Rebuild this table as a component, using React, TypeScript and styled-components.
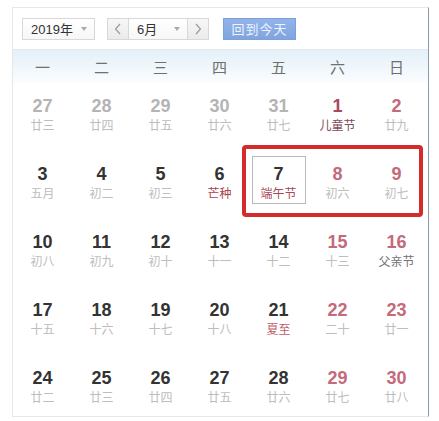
import React from "react";
import styled, { createGlobalStyle } from "styled-components";

type Kind = "other" | "normal" | "weekend";

interface Day {
  n: number;
  sub: string;
  kind: Kind;
  subColor?: string;
  numColor?: string;
  selected?: boolean;
}

const WEEK = ["一", "二", "三", "四", "五", "六", "日"];

const DAYS: Day[] = [
  { n: 27, sub: "廿三", kind: "other" },
  { n: 28, sub: "廿四", kind: "other" },
  { n: 29, sub: "廿五", kind: "other" },
  { n: 30, sub: "廿六", kind: "other" },
  { n: 31, sub: "廿七", kind: "other" },
  { n: 1, sub: "儿童节", kind: "weekend", subColor: "#7d4c58", numColor: "#a54a5e" },
  { n: 2, sub: "廿九", kind: "weekend" },
  { n: 3, sub: "五月", kind: "normal" },
  { n: 4, sub: "初二", kind: "normal" },
  { n: 5, sub: "初三", kind: "normal" },
  { n: 6, sub: "芒种", kind: "normal", subColor: "#a8424e" },
  { n: 7, sub: "端午节", kind: "normal", subColor: "#a8485a", selected: true },
  { n: 8, sub: "初六", kind: "weekend" },
  { n: 9, sub: "初七", kind: "weekend" },
  { n: 10, sub: "初八", kind: "normal" },
  { n: 11, sub: "初九", kind: "normal" },
  { n: 12, sub: "初十", kind: "normal" },
  { n: 13, sub: "十一", kind: "normal" },
  { n: 14, sub: "十二", kind: "normal" },
  { n: 15, sub: "十三", kind: "weekend" },
  { n: 16, sub: "父亲节", kind: "weekend", subColor: "#727272" },
  { n: 17, sub: "十五", kind: "normal" },
  { n: 18, sub: "十六", kind: "normal" },
  { n: 19, sub: "十七", kind: "normal" },
  { n: 20, sub: "十八", kind: "normal" },
  { n: 21, sub: "夏至", kind: "normal", subColor: "#c05a68" },
  { n: 22, sub: "二十", kind: "weekend" },
  { n: 23, sub: "廿一", kind: "weekend" },
  { n: 24, sub: "廿二", kind: "normal" },
  { n: 25, sub: "廿三", kind: "normal" },
  { n: 26, sub: "廿四", kind: "normal" },
  { n: 27, sub: "廿五", kind: "normal" },
  { n: 28, sub: "廿六", kind: "normal" },
  { n: 29, sub: "廿七", kind: "weekend" },
  { n: 30, sub: "廿八", kind: "weekend" },
];

const numColors: Record<Kind, string> = {
  other: "#b4b4b4",
  normal: "#333333",
  weekend: "#c46a7a",
};

const Chevron: React.FC<{ dir: "left" | "right" }> = ({ dir }) => (
  <svg width="8" height="12" viewBox="0 0 8 12">
    <path
      d={dir === "left" ? "M6 1 L1.5 6 L6 11" : "M2 1 L6.5 6 L2 11"}
      fill="none"
      stroke="#9a9a9a"
      strokeWidth="1.2"
    />
  </svg>
);

const App: React.FC = () => {
  return (
    <>
      <GlobalStyle />
      <Panel>
        <Toolbar>
          <Select $w={73}>
            <span>2019年</span>
            <Caret />
          </Select>
          <MonthGroup>
            <ArrowBtn>
              <Chevron dir="left" />
            </ArrowBtn>
            <Select $w={58} $flat>
              <span>6月</span>
              <Caret />
            </Select>
            <ArrowBtn>
              <Chevron dir="right" />
            </ArrowBtn>
          </MonthGroup>
          <TodayBtn>回到今天</TodayBtn>
        </Toolbar>

        <WeekRow>
          {WEEK.map((w) => (
            <WeekLabel key={w}>{w}</WeekLabel>
          ))}
        </WeekRow>

        <Grid>
          {DAYS.map((d, i) => (
            <Cell key={i}>
              <Inner $selected={!!d.selected}>
                <Num style={{ color: d.numColor ?? numColors[d.kind] }}>{d.n}</Num>
                <Lunar style={d.subColor ? { color: d.subColor } : undefined}>{d.sub}</Lunar>
              </Inner>
            </Cell>
          ))}
        </Grid>

        <Mark />
      </Panel>
    </>
  );
};

export default App;

// ===== styled-components =====

const GlobalStyle = createGlobalStyle`
  body {
    margin: 0;
    background: #ffffff;
    font-family: "Liberation Sans", "Noto Sans CJK SC", sans-serif;
  }
`;

const Panel = styled.div`
  position: relative;
  margin: 7px 0 0 12px;
  width: 415px;
  height: 408px;
  border: 1px solid #e8e8e8;
  border-right: 1px solid #8d9aaa;
  overflow: hidden;
  background: #fff;
`;

const Toolbar = styled.div`
  display: flex;
  align-items: center;
  height: 41px;
  padding: 0 0 0 9px;
`;

const Select = styled.div<{ $w: number; $flat?: boolean }>`
  box-sizing: border-box;
  width: ${(p) => p.$w}px;
  height: 22px;
  display: flex;
  align-items: center;
  justify-content: space-between;
  padding: 0 7px 0 8px;
  border: 1px solid #d8d8d8;
  border-left: ${(p) => (p.$flat ? "none" : "1px solid #d8d8d8")};
  border-right: ${(p) => (p.$flat ? "none" : "1px solid #d8d8d8")};
  background: linear-gradient(#ffffff, #f7f7f7);
  font-family: "Liberation Sans", "Noto Sans CJK SC", sans-serif;
  font-size: 13px;
  color: #333;
`;

const Caret = styled.span`
  width: 0;
  height: 0;
  border-left: 3px solid transparent;
  border-right: 3px solid transparent;
  border-top: 4px solid #aaa;
`;

const MonthGroup = styled.div`
  display: flex;
  margin-left: 12px;
`;

const ArrowBtn = styled.div`
  box-sizing: border-box;
  width: 22px;
  height: 22px;
  display: flex;
  align-items: center;
  justify-content: center;
  border: 1px solid #d8d8d8;
  background: linear-gradient(#f7f7f7, #ebebeb);
`;

const TodayBtn = styled.div`
  box-sizing: border-box;
  margin-left: 14px;
  width: 73px;
  height: 22px;
  display: flex;
  align-items: center;
  justify-content: center;
  background: linear-gradient(#92b4ea, #80a4df);
  border: 1px solid #7ea0d8;
  color: #eef4ff;
  font-family: "Noto Sans CJK SC", sans-serif;
  font-size: 13px;
  letter-spacing: 1px;
`;

const WeekRow = styled.div`
  display: grid;
  grid-template-columns: repeat(7, 59px);
  height: 33px;
  border-top: 1px solid #e4e8ec;
  background: linear-gradient(#e4f0f8, #fbfdfe);
`;

const WeekLabel = styled.div`
  display: flex;
  align-items: center;
  justify-content: center;
  font-family: "Noto Sans CJK SC", sans-serif;
  font-size: 15px;
  color: #707070;
`;

const Grid = styled.div`
  display: grid;
  grid-template-columns: repeat(7, 59px);
  grid-auto-rows: 68px;
`;

const Cell = styled.div`
  display: flex;
  justify-content: center;
  padding-top: 5px;
`;

const Inner = styled.div<{ $selected: boolean }>`
  box-sizing: border-box;
  width: 54px;
  height: 48px;
  display: flex;
  flex-direction: column;
  align-items: center;
  padding-top: 8px;
  border: 1px solid ${(p) => (p.$selected ? "#b9b9b9" : "transparent")};
`;

const Num = styled.div`
  font-family: "Liberation Sans", sans-serif;
  font-weight: 700;
  font-size: 18px;
  line-height: 18px;
`;

const Lunar = styled.div`
  margin-top: 3px;
  font-family: "Noto Sans CJK SC", sans-serif;
  font-size: 12px;
  line-height: 14px;
  color: #bdbdbd;
`;

const Mark = styled.div`
  position: absolute;
  left: 229px;
  top: 137px;
  width: 181px;
  height: 72px;
  box-sizing: border-box;
  border: 4px solid #d62b2b;
  border-radius: 4px;
`;
